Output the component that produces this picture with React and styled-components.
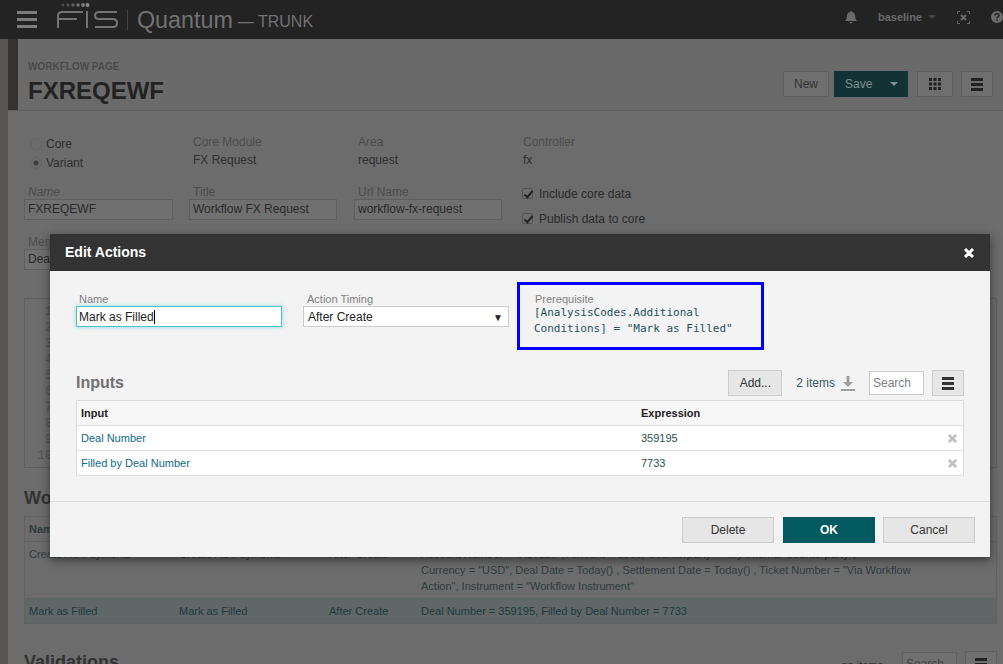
import React from 'react';
import styled, { createGlobalStyle } from 'styled-components';

const GlobalStyle = createGlobalStyle`
  html, body {
    margin: 0;
    height: 100%;
    overflow: hidden;
    background: #6c6c6c;
    font-family: "Liberation Sans", Arial, sans-serif;
    font-size: 12px;
  }
  * { box-sizing: border-box; }
`;

const Page = styled.div`
  width: 1003px;
  height: 664px;
  position: relative;
  overflow: hidden;
  background: #6c6c6c;
`;

const TopBar = styled.div`
  height: 39px;
  background: #232323;
  display: flex;
  align-items: center;
  padding: 0 0 0 17px;
`;

const Burger = styled.div`
  width: 20px;
  height: 17px;
  display: flex;
  flex-direction: column;
  justify-content: space-between;
  margin-right: 20px;
  & > i {
    display: block;
    height: 3px;
    background: #7d7d7d;
  }
`;

const Product = styled.span`
  font-size: 23.3px;
  color: #727272;
  margin-left: 8px;
  padding-left: 9px;
  border-left: 1px solid #444;
  line-height: 20px;
  height: 20px;
`;

const Branch = styled.span`
  font-size: 16px;
  color: #727272;
  margin-left: 5px;
  margin-top: 5px;
`;

const TopRight = styled.div`
  margin: -5px 0 0 auto;
  display: flex;
  align-items: center;
  color: #6a6a6a;
  font-size: 11px;
  font-weight: bold;
`;

const User = styled.span`
  margin-left: 21px;
  margin-right: 21px;
  display: flex;
  align-items: center;
  gap: 6px;
`;

const Caret = styled.i`
  width: 0;
  height: 0;
  border-left: 4px solid transparent;
  border-right: 4px solid transparent;
  border-top: 4px solid ${p => p.$color || '#444'};
`;

const Body = styled.div`
  display: flex;
  height: 625px;
`;

const Rail = styled.div`
  width: 8px;
  background: #575655;
`;

const Content = styled.div`
  flex: 1;
  min-width: 0;
`;

const PageHead = styled.div`
  height: 72px;
  border-bottom: 1px solid #5f5f5f;
  background: #6a6a6a;
  display: flex;
  position: relative;
  padding-left: 20px;
`;

const Marker = styled.div`
  position: absolute;
  left: 0;
  top: 0;
  bottom: 0;
  width: 10px;
  background: #333;
`;

const HeadText = styled.div`
  padding-top: 22px;
`;

const Eyebrow = styled.div`
  font-size: 10px;
  line-height: 11px;
  font-weight: bold;
  color: #4a4a4a;
`;

const PageTitle = styled.div`
  font-size: 24px;
  line-height: 28px;
  font-weight: bold;
  color: #222;
  margin-top: 5px;
`;

const HeadActions = styled.div`
  margin-left: auto;
  padding: 32px 10px 0 0;
  display: flex;
  height: 58px;
`;

const GhostButton = styled.div`
  height: 26px;
  width: ${p => p.$w}px;
  margin-left: ${p => p.$gap || 0}px;
  border: 1px solid #5f5f5f;
  background: #6f6f6f;
  color: #333;
  display: flex;
  align-items: center;
  justify-content: center;
`;

const SaveGroup = styled.div`
  width: 74px;
  height: 26px;
  margin-left: 5px;
  background: #123236;
  color: #7d8f90;
  display: flex;
  align-items: center;
  padding-left: 11px;
  gap: 18px;
`;

const Form = styled.div`
  padding: 24px 0 0 16px;
`;

const FormRow = styled.div`
  display: flex;
  height: ${p => p.$h}px;
`;

const Col = styled.div`
  width: ${p => p.$w}px;
  flex: none;
`;

const Label = styled.div`
  font-size: 12px;
  line-height: 14px;
  color: #4c4c4c;
  margin-left: ${p => (p.$indent ? '4px' : '0')};
  font-style: ${p => (p.$italic ? 'italic' : 'normal')};
`;

const Value = styled.div`
  font-size: 12px;
  line-height: 20px;
  margin-top: 1px;
  color: #2f2f2f;
`;

const RadioGroup = styled.div`
  margin-top: -1px;
`;

const Radio = styled.div`
  display: flex;
  align-items: center;
  gap: 4px;
  height: 19px;
  margin-left: 6px;
  color: #2e2e2e;
  & > i {
    width: 12px;
    height: 12px;
    border-radius: 50%;
    border: 1px solid #636363;
    background: ${p => (p.$on ? 'radial-gradient(circle, #3d3d3d 0 2px, #6c6c6c 3px)' : '#6c6c6c')};
  }
`;

const GhostInput = styled.div`
  width: ${p => p.$w}px;
  height: 21px;
  border: 1px solid #5f5f5f;
  background: #707070;
  color: #2a2a2a;
  line-height: 19px;
  padding-left: 3px;
`;

const CheckGroup = styled.div`
  margin-top: -4px;
`;

const Check = styled.div`
  display: flex;
  align-items: center;
  gap: 6px;
  height: 25px;
  color: #2a2a2a;
  & > i {
    width: 11px;
    height: 11px;
    border: 1px solid #555;
    border-radius: 2px;
    background: #6e6e6e;
    position: relative;
  }
  & > i::after {
    content: '';
    position: absolute;
    left: 3px;
    top: 0;
    width: 3px;
    height: 7px;
    border: solid #222;
    border-width: 0 2px 2px 0;
    transform: rotate(40deg);
  }
`;

const CodeBox = styled.div`
  margin: 28px 0 0 16px;
  width: 973px;
  height: 170px;
  border: 1px solid #5f5f5f;
  padding: 5px 0 0 12px;
  font-family: "Liberation Mono", monospace;
  font-size: 12px;
  line-height: 16px;
  color: #555;
  text-align: right;
`;

const Lines = styled.div`
  width: 15px;
`;

const SectionTitle = styled.div`
  font-size: 18px;
  line-height: 20px;
  font-weight: bold;
  color: #333;
  margin: ${p => (p.$flush ? '1px 0 0' : '20px 0 0 16px')};
`;

const BackTable = styled.div`
  margin: 8px 0 0 16px;
  width: 973px;
  border: 1px solid #626262;
`;

const BackRow = styled.div`
  display: grid;
  grid-template-columns: 150px 150px 92px 1fr;
  padding: 4px 0 4px 4px;
  font-size: 11px;
  line-height: 16px;
  background: ${p => (p.$selected ? '#5f6767' : 'transparent')};
  color: ${p => (p.$selected ? '#1e3a3f' : '#2f3d3f')};
  border-top: ${p => (p.$first ? 'none' : '1px solid #5f6261')};
  font-weight: ${p => (p.$head ? 'bold' : 'normal')};
`;

const ValidationBar = styled.div`
  margin: 27px 0 0 16px;
  width: 973px;
  display: flex;
  align-items: flex-start;
  height: 28px;
`;

const NoItems = styled.span`
  margin-left: auto;
  color: #333;
  font-size: 11px;
  line-height: 20px;
  margin-top: 4px;
`;

const GhostSearch = styled.div`
  margin: 1px 0 0 19px;
  width: 55px;
  height: 24px;
  border: 1px solid #5f5f5f;
  background: #707070;
  color: #444;
  line-height: 22px;
  padding-left: 3px;
`;

const Backdrop = styled.div`
  position: absolute;
  left: 50px;
  top: 234px;
  width: 940px;
  height: 323px;
  background: #f3f3f3;
  box-shadow: 0 3px 9px rgba(0, 0, 0, 0.5);
  display: flex;
  flex-direction: column;
`;

const ModalHead = styled.div`
  height: 37px;
  flex: none;
  background: #333;
  color: #fff;
  font-size: 14px;
  font-weight: bold;
  display: flex;
  align-items: center;
  justify-content: space-between;
  padding: 0 16px 0 15px;
  & > span {
    margin-top: -2px;
  }
`;

const ModalBody = styled.div`
  flex: 1;
  padding: 0 25px;
`;

const FieldRow = styled.div`
  display: flex;
  padding-top: 11px;
  height: 99px;
`;

const Field = styled.div`
  width: ${p => p.$w}px;
  flex: none;
  padding-top: 11px;
`;

const FieldLabel = styled.div`
  font-size: 11px;
  line-height: 13px;
  color: #808080;
  margin-left: 4px;
`;

const TextInput = styled.div`
  width: 206px;
  height: 21px;
  margin-left: 1px;
  border: 1px solid #4ec3d0;
  box-shadow: 0 0 4px rgba(78, 195, 208, 0.6);
  background: #fff;
  color: #222;
  line-height: 20px;
  padding-left: 2px;
  & > b {
    display: inline-block;
    width: 1px;
    height: 14px;
    background: #000;
    vertical-align: -3px;
  }
`;

const SelectBox = styled.div`
  width: 206px;
  height: 21px;
  border: 1px solid #ccc;
  background: #fff;
  color: #222;
  line-height: 19px;
  padding: 1px 5px 0 4px;
  display: flex;
  justify-content: space-between;
  align-items: center;
  & > i {
    font-style: normal;
    font-size: 10px;
  }
`;

const Prereq = styled.div`
  width: 247px;
  height: 68px;
  border: 3px solid #0000ff;
  padding: 8px 14px;
`;

const PrereqLabel = styled.div`
  font-size: 11px;
  line-height: 12px;
  margin-left: 1px;
  color: #808080;
`;

const Mono = styled.div`
  font-family: "DejaVu Sans Mono", monospace;
  font-size: 11px;
  line-height: 16px;
  color: #26525c;
`;

const InputsBar = styled.div`
  display: flex;
  align-items: center;
  height: 26px;
  margin: 0 1px 4px 0;
`;

const InputsTitle = styled.div`
  font-size: 16px;
  font-weight: bold;
  margin-left: 1px;
  color: #707070;
`;

const AddButton = styled.div`
  margin-left: auto;
  width: 54px;
  height: 26px;
  border: 1px solid #ccc;
  background: #e6e6e6;
  color: #333;
  display: flex;
  align-items: center;
  justify-content: center;
`;

const Count = styled.div`
  margin-left: 14px;
  color: #335c66;
  display: flex;
  align-items: center;
  gap: 6px;
`;

const SearchBox = styled.div`
  margin-left: 14px;
  width: 55px;
  height: 24px;
  border: 1px solid #ccc;
  background: #fff;
  color: #808080;
  line-height: 22px;
  padding-left: 3px;
`;

const MenuButton = styled.div`
  margin-left: 8px;
  width: 32px;
  height: 26px;
  border: 1px solid ${p => (p.$ghost ? '#5f5f5f' : '#ccc')};
  background: ${p => (p.$ghost ? '#6f6f6f' : '#e6e6e6')};
  display: flex;
  align-items: center;
  justify-content: center;
  flex: none;
`;

const Table = styled.div`
  width: 888px;
  margin-left: 1px;
  border: 1px solid #ddd;
`;

const Row = styled.div`
  display: grid;
  grid-template-columns: 560px 1fr 15px;
  align-items: center;
  height: 25px;
  padding-left: 4px;
  background: #fff;
  border-top: 1px solid #ddd;
  font-size: 11px;
`;

const HeadRow = styled(Row)`
  height: 24px;
  background: #f7f7f7;
  border-top: none;
  color: #222;
  font-weight: bold;
`;

const InputName = styled.span`
  color: #0f6a8a;
`;

const InputValue = styled.span`
  color: #2d4f55;
`;

const ModalFoot = styled.div`
  height: 56px;
  flex: none;
  border-top: 1px solid #ddd;
  display: flex;
  justify-content: flex-end;
  align-items: center;
  gap: 8px;
  padding: 0 15px 0 0;
`;

const FootButton = styled.div`
  width: 92px;
  height: 26px;
  display: flex;
  align-items: center;
  justify-content: center;
  margin-left: ${p => (p.$primary ? '1px' : '0')};
  border: 1px solid ${p => (p.$primary ? '#005a60' : '#ccc')};
  background: ${p => (p.$primary ? '#005a60' : '#e6e6e6')};
  color: ${p => (p.$primary ? '#fff' : '#333')};
  font-weight: ${p => (p.$primary ? 'bold' : 'normal')};
`;

const Logo = () => (
  <svg width="62" height="28" viewBox="0 0 62 28" fill="none" style={{ marginTop: -5 }}>
    <g>
      <circle cx="6" cy="2" r="1.600" fill="#4a4a4a" />
      <circle cx="11" cy="2" r="1.600" fill="#555" />
      <circle cx="16" cy="2" r="1.700" fill="#606060" />
      <circle cx="21" cy="2" r="1.800" fill="#707070" />
      <circle cx="26" cy="2" r="1.900" fill="#7c7c7c" />
      <circle cx="30.500" cy="2" r="2" fill="#888" />
    </g>
    <g stroke="#737373" strokeWidth="2" fill="none">
      <path d="M1 25V13q0-4 4-4h21M1 16h19" />
      <path d="M30 8v17" />
      <path d="M60 9H42q-4 0-4 3.500t4 3.500h14q4 0 4 4t-4 4H38" />
    </g>
  </svg>
);

const BarsIcon = ({ color = '#333' }) => (
  <svg width="12" height="13" viewBox="0 0 12 13" fill={color}>
    <rect y="0" width="12" height="3" />
    <rect y="5" width="12" height="3" />
    <rect y="10" width="12" height="3" />
  </svg>
);

const GridIcon = () => (
  <svg width="12" height="12" viewBox="0 0 12 12" fill="#222">
    {[0, 4.5, 9].flatMap(y =>
      [0, 4.5, 9].map(x => <rect key={`${x}-${y}`} x={x} y={y} width="3" height="3" />)
    )}
  </svg>
);

const CloseIcon = ({ size = 10, color = '#fff', width = 3 }) => (
  <svg width={size} height={size} viewBox="0 0 10 10" stroke={color} strokeWidth={width}>
    <path d="M1 1l8 8M9 1l-8 8" />
  </svg>
);

const DownloadIcon = () => (
  <svg width="14" height="15" viewBox="0 0 14 15" fill="#a0a0a0">
    <path d="M5.500 0h3v6H12L7 11 2 6h3.500z" />
    <rect y="13" width="14" height="2" />
  </svg>
);

const BellIcon = () => (
  <svg width="12" height="13" viewBox="0 0 12 13" fill="#6a6a6a">
    <path d="M6 0q1 0 1 1 3 .6 3 4 0 3 2 5H0q2-2 2-5 0-3.400 3-4 0-1 1-1zM4.500 11h3q-.3 1.500-1.500 1.500T4.500 11z" />
  </svg>
);

const ExpandIcon = () => (
  <svg width="13" height="13" viewBox="0 0 13 13" fill="none" stroke="#6a6a6a">
    <path d="M.5 3V.5H3M10 .5h2.500V3M12.500 10v2.500H10M3 12.500H.5V10" />
    <path d="M4 4l5 5M9 4l-5 5" strokeWidth="2" />
  </svg>
);

const HelpIcon = () => (
  <svg width="12" height="12" viewBox="0 0 12 12" style={{ marginLeft: 21 }}>
    <circle cx="6" cy="6" r="6" fill="#6a6a6a" />
    <path d="M4 4.500q0-1.700 2-1.700t2 1.600Q8 5.500 6 6.500V7.500" stroke="#232323" strokeWidth="1.400" fill="none" />
    <rect x="5.300" y="8.400" width="1.400" height="1.400" fill="#232323" />
  </svg>
);

const App = () => (
  <Page>
    <GlobalStyle />
    <TopBar>
      <Burger><i /><i /><i /></Burger>
      <Logo />
      <Product>Quantum</Product>
      <Branch>— TRUNK</Branch>
      <TopRight>
        <BellIcon />
        <User>baseline <Caret /></User>
        <ExpandIcon />
        <HelpIcon />
      </TopRight>
    </TopBar>
    <Body>
      <Rail />
      <Content>
        <PageHead>
          <Marker />
          <HeadText>
            <Eyebrow>WORKFLOW PAGE</Eyebrow>
            <PageTitle>FXREQEWF</PageTitle>
          </HeadText>
          <HeadActions>
            <GhostButton $w={46}>New</GhostButton>
            <SaveGroup>Save <Caret $color="#7d8f90" /></SaveGroup>
            <GhostButton $w={36} $gap={9}><GridIcon /></GhostButton>
            <GhostButton $w={32} $gap={8}><BarsIcon color="#222" /></GhostButton>
          </HeadActions>
        </PageHead>
        <Form>
          <FormRow $h={50}>
            <Col $w={169}>
              <RadioGroup>
                <Radio><i />Core</Radio>
                <Radio $on><i />Variant</Radio>
              </RadioGroup>
            </Col>
            <Col $w={165}>
              <Label>Core Module</Label>
              <Value>FX Request</Value>
            </Col>
            <Col $w={165}>
              <Label>Area</Label>
              <Value>request</Value>
            </Col>
            <Col $w={165}>
              <Label>Controller</Label>
              <Value>fx</Value>
            </Col>
          </FormRow>
          <FormRow $h={50}>
            <Col $w={165}>
              <Label $italic $indent>Name</Label>
              <GhostInput $w={149}>FXREQEWF</GhostInput>
            </Col>
            <Col $w={165}>
              <Label $indent>Title</Label>
              <GhostInput $w={148}>Workflow FX Request</GhostInput>
            </Col>
            <Col $w={168}>
              <Label $indent>Url Name</Label>
              <GhostInput $w={148}>workflow-fx-request</GhostInput>
            </Col>
            <Col $w={200}>
              <CheckGroup>
                <Check><i />Include core data</Check>
                <Check><i />Publish data to core</Check>
              </CheckGroup>
            </Col>
          </FormRow>
          <Label $indent>Menu</Label>
          <GhostInput $w={149}>Deal</GhostInput>
        </Form>
        <CodeBox>
          <Lines>1<br />2<br />3<br />4<br />5<br />6<br />7<br />8<br />9<br />10</Lines>
        </CodeBox>
        <SectionTitle>Workflow Actions</SectionTitle>
        <BackTable>
          <BackRow $head $first>
            <span>Name</span><span>Title</span><span>Timing</span><span>Inputs</span>
          </BackRow>
          <BackRow>
            <span>Create AS Payments</span>
            <span>Create AS Payments</span>
            <span>After Create</span>
            <span>
              Account Number = "A10227", Amount = 1000, Counterparty = "My Internal Counterparty",<br />
              Currency = "USD", Deal Date = Today() , Settlement Date = Today() , Ticket Number = "Via Workflow<br />
              Action", Instrument = "Workflow Instrument"
            </span>
          </BackRow>
          <BackRow $selected>
            <span>Mark as Filled</span>
            <span>Mark as Filled</span>
            <span>After Create</span>
            <span>Deal Number = 359195, Filled by Deal Number = 7733</span>
          </BackRow>
        </BackTable>
        <ValidationBar>
          <SectionTitle $flush>Validations</SectionTitle>
          <NoItems>no items</NoItems>
          <GhostSearch>Search</GhostSearch>
          <MenuButton $ghost><BarsIcon color="#222" /></MenuButton>
        </ValidationBar>
      </Content>
    </Body>
    <Backdrop>
      <ModalHead>
        <span>Edit Actions</span>
        <CloseIcon />
      </ModalHead>
      <ModalBody>
        <FieldRow>
          <Field $w={228}>
            <FieldLabel>Name</FieldLabel>
            <TextInput>Mark as Filled<b /></TextInput>
          </Field>
          <Field $w={214}>
            <FieldLabel>Action Timing</FieldLabel>
            <SelectBox>After Create<i>▼</i></SelectBox>
          </Field>
          <Prereq>
            <PrereqLabel>Prerequisite</PrereqLabel>
            <Mono>[AnalysisCodes.Additional<br />Conditions] = "Mark as Filled"</Mono>
          </Prereq>
        </FieldRow>
        <InputsBar>
          <InputsTitle>Inputs</InputsTitle>
          <AddButton>Add...</AddButton>
          <Count>2 items <DownloadIcon /></Count>
          <SearchBox>Search</SearchBox>
          <MenuButton><BarsIcon /></MenuButton>
        </InputsBar>
        <Table>
          <HeadRow><span>Input</span><span>Expression</span></HeadRow>
          <Row>
            <InputName>Deal Number</InputName>
            <InputValue>359195</InputValue>
            <CloseIcon size={9} color="#c0c0c0" />
          </Row>
          <Row>
            <InputName>Filled by Deal Number</InputName>
            <InputValue>7733</InputValue>
            <CloseIcon size={9} color="#c0c0c0" />
          </Row>
        </Table>
      </ModalBody>
      <ModalFoot>
        <FootButton>Delete</FootButton>
        <FootButton $primary>OK</FootButton>
        <FootButton>Cancel</FootButton>
      </ModalFoot>
    </Backdrop>
  </Page>
);

export default App;
